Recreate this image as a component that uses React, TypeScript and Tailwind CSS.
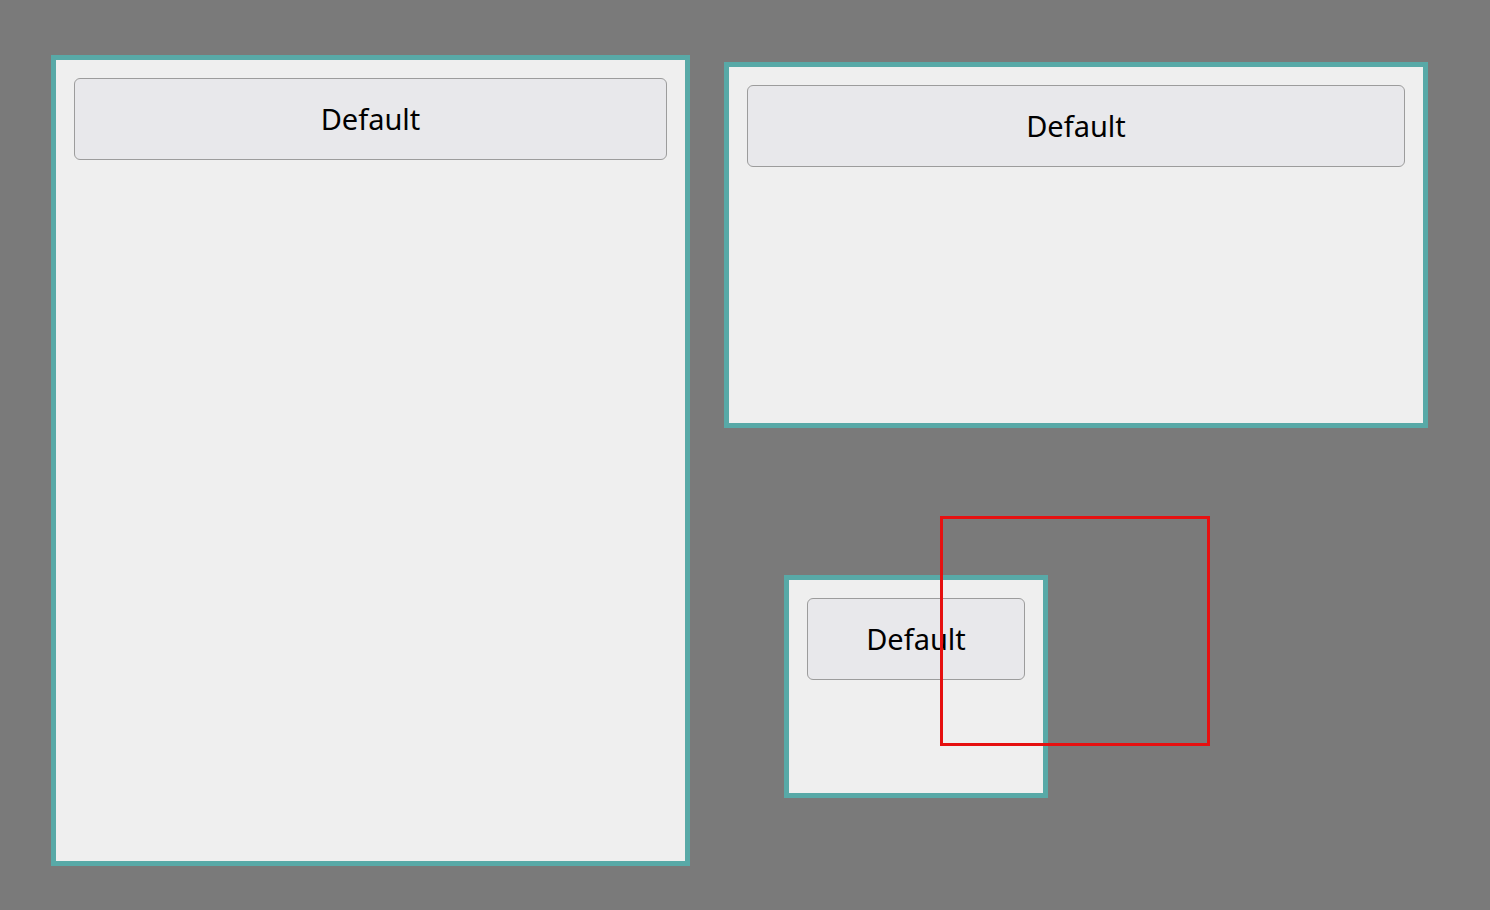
const font = { fontFamily: '"Noto Sans", "Open Sans", sans-serif' };

function Pane({ className }: { className: string }) {
    return (
        <div className={`absolute border-[5px] border-[#58a9a7] bg-[#efefef] ${className}`}>
            <div className="px-[18px] pt-[18px]">
                <button
                    className="flex h-[82px] w-full items-center justify-center rounded-[6px] border border-[#9c9c9c] bg-[#e8e8eb] text-[29px] text-black"
                    style={font}
                >
                    Default
                </button>
            </div>
        </div>
    );
}

export default function App() {
    return (
        <div className="relative h-[910px] w-[1490px] overflow-hidden bg-[#7a7a7a]">
            {/* left tall pane */}
            <Pane className="left-[51px] top-[55px] h-[811px] w-[639px]" />

            {/* top right wide pane */}
            <Pane className="left-[724px] top-[62px] h-[366px] w-[704px]" />

            {/* small pane */}
            <Pane className="left-[784px] top-[575px] h-[223px] w-[264px]" />

            {/* red selection rectangle */}
            <div className="absolute left-[940px] top-[516px] h-[230px] w-[270px] border-[3px] border-[#e61010]" />
        </div>
    );
}
